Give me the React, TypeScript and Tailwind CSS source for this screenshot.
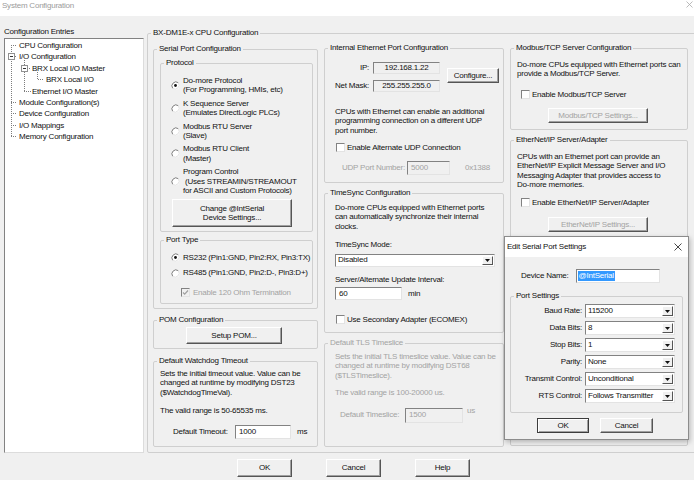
import type { ReactNode } from "react";

const font =
  "font-['Liberation_Sans',Arial,sans-serif] text-[8px] leading-[9.4px] tracking-[-0.22px] text-[#111]";

const sunken =
  "border border-t-[#828282] border-l-[#828282] border-r-[#e3e3e3] border-b-[#e3e3e3]";

function Group({
  title,
  className = "",
  dim = false,
  children,
}: {
  title: string;
  className?: string;
  dim?: boolean;
  children?: ReactNode;
}) {
  return (
    <fieldset className={`shrink-0 border border-[#cfcfcf] rounded-[2px] ${className}`}>
      <legend className={`ml-[3px] px-[2px] leading-[10px] ${dim ? "text-[#a3a3a3]" : ""}`}>
        {title}
      </legend>
      {children}
    </fieldset>
  );
}

function Btn({
  children,
  className = "",
  dim = false,
  def = false,
}: {
  children: ReactNode;
  className?: string;
  dim?: boolean;
  def?: boolean;
}) {
  return (
    <div
      className={`flex items-center justify-center text-center bg-[#f0f0f0] border ${
        def
          ? "border-[#3c3c3c] shadow-[inset_1px_1px_0_#fff,inset_-1px_-1px_0_#a0a0a0]"
          : "border-t-white border-l-white border-r-[#555] border-b-[#555] shadow-[inset_-1px_-1px_0_#a0a0a0]"
      } ${dim ? "text-[#a3a3a3]" : ""} ${className}`}
    >
      {children}
    </div>
  );
}

function Edit({ children, className = "", ro = false }: { children?: ReactNode; className?: string; ro?: boolean }) {
  return (
    <div className={`flex items-center whitespace-nowrap ${ro ? "bg-[#f0f0f0]" : "bg-white"} ${sunken} ${className}`}>
      {children}
    </div>
  );
}

function Select({ value, className = "" }: { value: string; className?: string }) {
  return (
    <div className={`flex items-stretch bg-white ${sunken} ${className}`}>
      <span className="flex-1 pl-[2px] flex items-center whitespace-nowrap">{value}</span>
      <span className="w-[11px] my-[1px] mr-[1px] flex items-center justify-center bg-[#f0f0f0] border border-t-white border-l-white border-r-[#555] border-b-[#555]">
        <svg width="5" height="3" viewBox="0 0 5 3">
          <path d="M0 0h5L2.5 3z" fill="#111" />
        </svg>
      </span>
    </div>
  );
}

function Radio({ checked = false, className = "" }: { checked?: boolean; className?: string }) {
  return (
    <svg width="9" height="9" viewBox="0 0 9 9" className={`shrink-0 ${className}`}>
      <circle cx="4.5" cy="4.5" r="4" fill="#fff" />
      <path d="M1.7 7.3A4 4 0 0 1 7.3 1.7" stroke="#7a7a7a" fill="none" />
      <path d="M7.3 1.7A4 4 0 0 1 1.7 7.3" stroke="#e2e2e2" fill="none" />
      {checked && <circle cx="4.5" cy="4.5" r="1.4" fill="#111" />}
    </svg>
  );
}

function Check({ checked = false, dim = false, className = "" }: { checked?: boolean; dim?: boolean; className?: string }) {
  return (
    <span className={`shrink-0 w-[9px] h-[9px] flex items-center justify-center ${dim ? "bg-[#f0f0f0]" : "bg-white"} ${sunken} ${className}`}>
      {checked && (
        <svg width="7" height="7" viewBox="0 0 7 7">
          <path d="M1 3.5l1.7 1.7L6 1.5" stroke={dim ? "#a0a0a0" : "#111"} strokeWidth="1.2" fill="none" />
        </svg>
      )}
    </span>
  );
}

const protocols = [
  { lines: ["Do-more Protocol", "(For Programming, HMIs, etc)"], checked: true },
  { lines: ["K Sequence Server", "(Emulates DirectLogic PLCs)"] },
  { lines: ["Modbus RTU Server", "(Slave)"] },
  { lines: ["Modbus RTU Client", "(Master)"] },
  { lines: ["Program Control", " (Uses STREAMIN/STREAMOUT", "for ASCII and Custom Protocols)"] },
];

const tree = [
  { label: "CPU Configuration", pl: "pl-[14px]" },
  { label: "I/O Configuration", pl: "pl-[14px]" },
  { label: "BRX Local I/O Master", pl: "pl-[27px]" },
  { label: "BRX Local I/O", pl: "pl-[41px]" },
  { label: "Ethernet I/O Master", pl: "pl-[27px]" },
  { label: "Module Configuration(s)", pl: "pl-[14px]" },
  { label: "Device Configuration", pl: "pl-[14px]" },
  { label: "I/O Mappings", pl: "pl-[14px]" },
  { label: "Memory Configuration", pl: "pl-[14px]" },
];

const portRows = [
  { label: "Baud Rate:", value: "115200" },
  { label: "Data Bits:", value: "8" },
  { label: "Stop Bits:", value: "1" },
  { label: "Parity:", value: "None" },
  { label: "Transmit Control:", value: "Unconditional" },
  { label: "RTS Control:", value: "Follows Transmitter" },
];

function TreeLines() {
  const dot = { stroke: "#7d7d7d", strokeDasharray: "1 1", fill: "none" } as const;
  return (
    <svg className="absolute left-0 top-0 pointer-events-none" width="60" height="110">
      <path d="M6.5 6V98" {...dot} />
      <path d="M6 6.5H12M10 17.5H12M6 63.5H12M6 74.5H12M6 86.5H12M6 97.5H12" {...dot} />
      <path d="M19.5 21V53M22 29.5H26M19 52.5H26" {...dot} />
      <path d="M32.5 33V40.5H39" {...dot} />
      <rect x="3.5" y="14.5" width="6" height="6" fill="#fff" stroke="#919191" />
      <path d="M5 17.5h3" stroke="#333" />
      <rect x="16.5" y="26.5" width="6" height="6" fill="#fff" stroke="#919191" />
      <path d="M18 29.5h3" stroke="#333" />
    </svg>
  );
}

function SerialColumn() {
  return (
    <div className="ml-[5px] mt-[6px] w-[165px] flex flex-col">
      <Group title="Serial Port Configuration" className="h-[265px]">
        <Group title="Protocol" className="ml-[6px] mt-[4px] w-[153px] h-[174px]">
          <div className="mt-[8px] flex flex-col gap-[4px]">
            {protocols.map((p) => (
              <div key={p.lines[0]} className="flex items-center">
                <Radio checked={p.checked} className="ml-[10px]" />
                <div className="ml-[3px] whitespace-pre">
                  {p.lines.map((l) => (
                    <div key={l}>{l}</div>
                  ))}
                </div>
              </div>
            ))}
          </div>
          <Btn className="ml-[11px] mt-[4px] w-[120px] h-[28px] flex-col">
            <span>Change @IntSerial</span>
            <span>Device Settings...</span>
          </Btn>
        </Group>
        <Group title="Port Type" className="ml-[6px] mt-[3px] w-[153px] h-[69px]">
          <div className="mt-[8px] flex items-center">
            <Radio checked className="ml-[10px]" />
            <span className="ml-[3px] whitespace-nowrap">RS232 (Pin1:GND, Pin2:RX, Pin3:TX)</span>
          </div>
          <div className="mt-[6px] flex items-center">
            <Radio className="ml-[10px]" />
            <span className="ml-[3px] whitespace-nowrap">RS485 (Pin1:GND, Pin2:D-, Pin3:D+)</span>
          </div>
          <div className="mt-[10px] flex items-center text-[#a3a3a3]">
            <Check checked dim className="ml-[20px]" />
            <span className="ml-[3px] whitespace-nowrap">Enable 120 Ohm Termination</span>
          </div>
        </Group>
      </Group>

      <Group title="POM Configuration" className="mt-[6px] h-[34px]">
        <Btn className="ml-[32px] mt-[2px] w-[96px] h-[17px]">Setup POM...</Btn>
      </Group>

      <Group title="Default Watchdog Timeout" className="mt-[7px] h-[91px]">
        <p className="mt-[3px] ml-[6px] whitespace-nowrap">
          Sets the initial timeout value. Value can be
          <br />
          changed at runtime by modifying DST23
          <br />
          ($WatchdogTimeVal).
        </p>
        <p className="mt-[9px] ml-[6px]">The valid range is 50-65535 ms.</p>
        <div className="mt-[9px] flex items-center">
          <span className="ml-[19px] w-[62px] whitespace-nowrap">Default Timeout:</span>
          <Edit className="w-[56px] h-[14px] pl-[3px]">1000</Edit>
          <span className="ml-[6px]">ms</span>
        </div>
      </Group>
    </div>
  );
}

function EthernetColumn() {
  return (
    <div className="ml-[6px] mt-[5px] w-[180px] flex flex-col">
      <Group title="Internal Ethernet Port Configuration" className="h-[140px]">
        <div className="mt-[9px] flex items-start">
          <div className="ml-[8px] grid grid-cols-[36px_67px] gap-x-[4px] gap-y-[6px] items-center">
            <span className="text-right">IP:</span>
            <Edit ro className="h-[12px] justify-center">192.168.1.22</Edit>
            <span className="text-right whitespace-nowrap">Net Mask:</span>
            <Edit ro className="h-[12px] justify-center">255.255.255.0</Edit>
          </div>
          <Btn className="ml-[7px] mt-[6px] w-[52px] h-[15px]">Configure...</Btn>
        </div>
        <p className="mt-[15px] ml-[10px] whitespace-nowrap">
          CPUs with Ethernet can enable an additional
          <br />
          programming connection on a different UDP
          <br />
          port number.
        </p>
        <div className="mt-[8px] ml-[11px] flex items-center">
          <Check />
          <span className="ml-[2px] whitespace-nowrap">Enable Alternate UDP Connection</span>
        </div>
        <div className="mt-[8px] flex items-center text-[#a3a3a3]">
          <span className="ml-[17px] w-[65px] whitespace-nowrap">UDP Port Number:</span>
          <Edit ro className="w-[43px] h-[14px] pl-[3px]">5000</Edit>
          <span className="ml-[15px]">0x1388</span>
        </div>
      </Group>

      <Group title="TimeSync Configuration" className="mt-[5px] h-[145px]">
        <p className="mt-[5px] ml-[10px] whitespace-nowrap">
          Do-more CPUs equipped with Ethernet ports
          <br />
          can automatically synchronize their internal
          <br />
          clocks.
        </p>
        <p className="mt-[9px] ml-[10px]">TimeSync Mode:</p>
        <Select value="Disabled" className="mt-[4px] ml-[10px] w-[160px] h-[13px]" />
        <p className="mt-[8px] ml-[10px] whitespace-nowrap">Server/Alternate Update Interval:</p>
        <div className="mt-[3px] ml-[10px] flex items-center">
          <Edit className="w-[67px] h-[13px] pl-[3px]">60</Edit>
          <span className="ml-[6px]">min</span>
        </div>
        <div className="mt-[15px] ml-[11px] flex items-center">
          <Check />
          <span className="ml-[2px] whitespace-nowrap">Use Secondary Adapter (ECOMEX)</span>
        </div>
      </Group>

      <Group title="Default TLS Timeslice" dim className="mt-[5px] h-[109px] text-[#a3a3a3]">
        <p className="mt-[4px] ml-[10px] whitespace-nowrap">
          Sets the initial TLS timeslice value. Value can be
          <br />
          changed at runtime by modifying DST68
          <br />
          ($TLSTimeslice).
        </p>
        <p className="mt-[8px] ml-[10px]">The valid range is 100-20000 us.</p>
        <div className="mt-[10px] flex items-center">
          <span className="ml-[15px] w-[65px] whitespace-nowrap">Default Timeslice:</span>
          <Edit ro className="w-[58px] h-[15px] pl-[3px]">1500</Edit>
          <span className="ml-[4px] self-start -mt-[2px]">us</span>
        </div>
      </Group>
    </div>
  );
}

function ServerColumn() {
  return (
    <div className="ml-[6px] mt-[5px] w-[178px] flex flex-col">
      <Group title="Modbus/TCP Server Configuration" className="h-[87px]">
        <p className="mt-[7px] ml-[6px] whitespace-nowrap">
          Do-more CPUs equipped with Ethernet ports can
          <br />
          provide a Modbus/TCP Server.
        </p>
        <div className="mt-[11px] ml-[10px] flex items-center">
          <Check />
          <span className="ml-[2px] whitespace-nowrap">Enable Modbus/TCP Server</span>
        </div>
        <Btn dim className="mt-[9px] ml-[37px] w-[100px] h-[15px]">Modbus/TCP Settings...</Btn>
      </Group>

      <Group title="EtherNet/IP Server/Adapter" className="mt-[5px] h-[311px]">
        <p className="mt-[7px] ml-[6px] whitespace-nowrap">
          CPUs with an Ethernet port can provide an
          <br />
          EtherNet/IP Explicit Message Server and I/O
          <br />
          Messaging Adapter that provides access to
          <br />
          Do-more memories.
        </p>
        <div className="mt-[8px] ml-[10px] flex items-center">
          <Check />
          <span className="ml-[2px] whitespace-nowrap">Enable EtherNet/IP Server/Adapter</span>
        </div>
        <Btn dim className="mt-[10px] ml-[37px] w-[100px] h-[15px]">EtherNet/IP Settings...</Btn>
      </Group>
    </div>
  );
}

function SerialDialog() {
  return (
    <div className="absolute left-[504px] top-[236px] w-[185px] h-[204px] flex flex-col bg-[#f0f0f0] border border-[#8c8c8c] shadow-[1px_2px_5px_rgba(0,0,0,0.25)]">
      <div className="h-[20px] bg-white flex items-center justify-between pl-[2px] pr-[6px]">
        <span>Edit Serial Port Settings</span>
        <svg width="8" height="8" viewBox="0 0 8 8">
          <path d="M0.5 0.5l7 7M7.5 0.5l-7 7" stroke="#333" strokeWidth="0.9" />
        </svg>
      </div>
      <div className="mt-[12px] pl-[16px] flex items-center">
        <span className="whitespace-nowrap">Device Name:</span>
        <Edit className="ml-[7px] w-[84px] h-[14px] pl-[1px] bg-white">
          <span className="bg-[#3399ff] text-white leading-[10px] px-[1px]">@IntSerial</span>
        </Edit>
      </div>
      <Group title="Port Settings" className="ml-[5px] mt-[8px] w-[173px] h-[122px]">
        <div className="pt-[3px] flex flex-col gap-[3px]">
          {portRows.map((r) => (
            <div key={r.label} className="flex items-center h-[14px]">
              <span className="w-[71px] text-right whitespace-nowrap">{r.label}</span>
              <Select value={r.value} className="ml-[3px] w-[90px] h-[14px]" />
            </div>
          ))}
        </div>
      </Group>
      <div className="mt-[5px] pl-[32px] flex gap-[11px]">
        <Btn def className="w-[52px] h-[15px]">OK</Btn>
        <Btn className="w-[53px] h-[15px]">Cancel</Btn>
      </div>
    </div>
  );
}

export default function App() {
  return (
    <div className={`relative w-[694px] h-[480px] overflow-hidden bg-[#f0f0f0] ${font}`}>
      {/* window title */}
      <div className="h-[16px] bg-white flex items-start justify-between pl-[2px] pr-[1px]">
        <span className="leading-[12px] text-[#9b9b9b]">System Configuration</span>
        <svg width="7" height="7" viewBox="0 0 7 7" className="mt-[1px]">
          <path d="M0.5 0.5l6 6M6.5 0.5l-6 6" stroke="#aaa" strokeWidth="0.8" />
        </svg>
      </div>

      <div className="flex h-[437px]">
        {/* configuration tree */}
        <div className="ml-[4px] w-[140px] shrink-0 flex flex-col pt-[11px]">
          <span className="leading-[10px]">Configuration Entries</span>
          <div className="mt-[1px] flex-1 relative bg-white border border-t-[#828282] border-l-[#828282] border-r-[#dcdcdc] border-b-[#dcdcdc] pt-[1px]">
            <TreeLines />
            {tree.map((t) => (
              <div key={t.label} className={`h-[11.4px] flex items-center whitespace-nowrap ${t.pl}`}>
                {t.label}
              </div>
            ))}
          </div>
        </div>

        {/* CPU configuration */}
        <Group title="BX-DM1E-x CPU Configuration" className="ml-[3px] mt-[12px] w-[560px] h-[425px]">
          <div className="flex items-start">
            <SerialColumn />
            <EthernetColumn />
            <ServerColumn />
          </div>
        </Group>
      </div>

      <div className="flex pt-[6px] pl-[237px] gap-[34px]">
        <Btn className="w-[55px] h-[18px]">OK</Btn>
        <Btn className="w-[55px] h-[18px]">Cancel</Btn>
        <Btn className="w-[55px] h-[18px]">Help</Btn>
      </div>

      <SerialDialog />
    </div>
  );
}
